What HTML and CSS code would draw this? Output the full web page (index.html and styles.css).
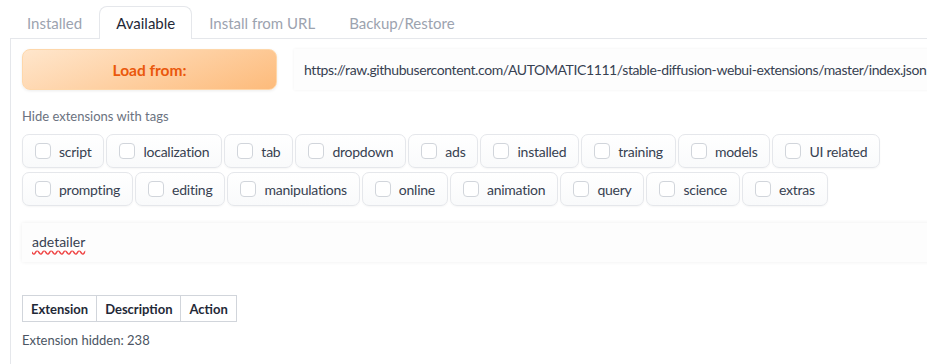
FILE: index.html
```html
<!DOCTYPE html>
<html lang="en">
  <head>
    <meta charset="UTF-8" />
    <title>Extensions</title>
    <link rel="stylesheet" href="styles.css">
  </head>
  <body>
    <div class="tabs">
      <div class="tab">Installed</div>
      <div class="tab active">Available</div>
      <div class="tab">Install from URL</div>
      <div class="tab">Backup/Restore</div>
    </div>

    <div class="panel">
      <!-- source row -->
      <div class="load-row">
        <button class="load-btn">Load from:</button>
        <div class="url-box">https://raw.githubusercontent.com/AUTOMATIC1111/stable-diffusion-webui-extensions/master/index.json</div>
      </div>

      <div class="tags-label">Hide extensions with tags</div>
      <div class="tags">
        <label class="chip"><span class="box"></span>script</label>
        <label class="chip"><span class="box"></span>localization</label>
        <label class="chip"><span class="box"></span>tab</label>
        <label class="chip"><span class="box"></span>dropdown</label>
        <label class="chip"><span class="box"></span>ads</label>
        <label class="chip"><span class="box"></span>installed</label>
        <label class="chip"><span class="box"></span>training</label>
        <label class="chip"><span class="box"></span>models</label>
        <label class="chip"><span class="box"></span>UI related</label>
        <label class="chip"><span class="box"></span>prompting</label>
        <label class="chip"><span class="box"></span>editing</label>
        <label class="chip"><span class="box"></span>manipulations</label>
        <label class="chip"><span class="box"></span>online</label>
        <label class="chip"><span class="box"></span>animation</label>
        <label class="chip"><span class="box"></span>query</label>
        <label class="chip"><span class="box"></span>science</label>
        <label class="chip"><span class="box"></span>extras</label>
      </div>

      <div class="search-box"><span class="typo">adetailer</span></div>

      <table class="ext-table">
        <thead>
          <tr>
            <th>Extension</th>
            <th>Description</th>
            <th>Action</th>
          </tr>
        </thead>
      </table>
      <div class="hidden-count">Extension hidden: 238</div>
    </div>
  </body>
</html>
```

FILE: styles.css
```css
body {
  margin: 0;
  padding: 6px 0 0 10px;
  font-family: Lato, "Liberation Sans", sans-serif;
  background: #fff;
  color: #374151;
  overflow: hidden;
}

.tabs {
  display: flex;
  height: 32px;
}

.tab {
  padding: 0 16px;
  font-size: 15px;
  line-height: 32px;
  color: #9ca3af;
  border: 1px solid transparent;
  border-bottom: none;
}

.tab.active {
  color: #1f2937;
  background: #fff;
  border-color: #e5e7eb;
  border-radius: 8px 8px 0 0;
  margin-bottom: -1px;
  position: relative;
  z-index: 1;
}

.panel {
  width: 1000px;
  height: 330px;
  border-left: 1px solid #e5e7eb;
  border-top: 1px solid #e5e7eb;
  padding: 10px 0 0 11px;
}

.load-row {
  display: flex;
  gap: 17px;
}

.load-btn {
  width: 255px;
  height: 41px;
  flex-shrink: 0;
  border: 1px solid #fed7aa;
  border-radius: 8px;
  background: linear-gradient(160deg, #ffe6cc, #fdbb7b);
  color: #ea580c;
  font-family: inherit;
  font-size: 15.5px;
  font-weight: 700;
  box-shadow: 0 1px 3px rgba(0, 0, 0, 0.08);
}

.url-box {
  flex: 1;
  height: 41px;
  line-height: 41px;
  padding-left: 10px;
  font-size: 14px;
  letter-spacing: -0.4px;
  background: #fdfdfd;
  box-shadow: 0 0 3px rgba(0, 0, 0, 0.06);
  white-space: nowrap;
  overflow: hidden;
}

.tags-label {
  margin-top: 16px;
  font-size: 13px;
  line-height: 20px;
  color: #6b7280;
}

.tags {
  display: flex;
  flex-wrap: wrap;
  gap: 4px 2px;
  width: 900px;
  margin-top: 8px;
}

.chip {
  display: flex;
  align-items: center;
  gap: 8px;
  height: 32px;
  padding: 0 12px;
  border: 1px solid #e5e7eb;
  border-radius: 7px;
  background: linear-gradient(#fff, #f9fafb);
  box-shadow: 0 1px 2px rgba(0, 0, 0, 0.04);
  font-size: 14px;
  letter-spacing: -0.25px;
  color: #374151;
}

.box {
  width: 14px;
  height: 14px;
  border: 1px solid #d1d5db;
  border-radius: 4px;
  background: #fff;
}

.search-box {
  margin-top: 17px;
  height: 39px;
  line-height: 38px;
  padding-left: 10px;
  font-size: 14px;
  background: #fdfdfd;
  box-shadow: 0 0 4px rgba(0, 0, 0, 0.07);
}

.typo {
  text-decoration: underline wavy #ef4444;
  text-decoration-skip-ink: none;
  text-underline-offset: 3px;
}

.ext-table {
  margin-top: 33px;
  border-collapse: collapse;
}

.ext-table th {
  border: 1px solid #d1d5db;
  padding: 0 8px;
  height: 25px;
  font-size: 13px;
  font-weight: 700;
  color: #1f2937;
}

.hidden-count {
  margin-top: 8px;
  font-size: 13px;
  line-height: 20px;
  color: #4b5563;
}
```
